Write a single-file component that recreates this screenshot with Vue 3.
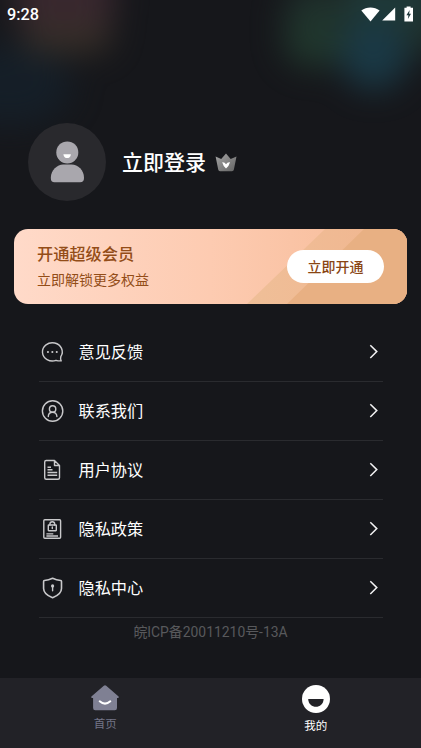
<script setup>
const rows = [
  { icon: 'chat', label: '意见反馈' },
  { icon: 'person', label: '联系我们' },
  { icon: 'doc', label: '用户协议' },
  { icon: 'policy', label: '隐私政策' },
  { icon: 'shield', label: '隐私中心' },
]
</script>

<template>
  <div class="screen">
    <svg class="glow" width="421" height="150" viewBox="0 0 421 150">
      <defs>
        <filter id="soft" x="-100%" y="-100%" width="300%" height="300%" color-interpolation-filters="sRGB"><feGaussianBlur stdDeviation="16" /></filter>
      </defs>
      <g filter="url(#soft)" opacity=".85">
        <ellipse cx="10" cy="85" rx="62" ry="42" fill="#15202a" />
        <rect x="22" y="15" width="90" height="38" rx="18" fill="#3c332a" />
        <rect x="15" y="-40" width="100" height="66" rx="20" fill="#3f2b32" />
        <rect x="285" y="-15" width="160" height="70" rx="25" fill="#21352f" />
        <ellipse cx="315" cy="42" rx="32" ry="26" fill="#223c30" />
        <ellipse cx="374" cy="54" rx="34" ry="36" fill="#1b3f4d" />
        <rect x="350" y="-30" width="90" height="50" fill="#213f3d" />
      </g>
    </svg>
    <header class="status">
      <span class="time">9:28</span>
      <div class="indicators">
        <svg class="wifi" width="19" height="15" viewBox="0 0 19 15"><path d="M0.3 3.6C5.5-.6 13.300-.6 18.600 3.600L9.500 14.600Z" fill="#fff" /></svg>
        <svg class="signal" width="14" height="14" viewBox="0 0 14 14"><path d="M13.200.4V13.500H.2Z" fill="#fff" /></svg>
        <svg class="battery" width="10" height="16" viewBox="0 0 10 16">
          <path d="M2.600 1.800V.4h4v1.400H9V15.400H.4V1.800Z" fill="#fff" />
          <path d="M5.700 4L2.400 9.200h2L3.900 13 7 7.800H5.100Z" fill="#20383c" />
        </svg>
      </div>
    </header>

    <section class="profile">
      <div class="avatar">
        <svg width="78" height="78" viewBox="0 0 78 78">
          <circle cx="39.300" cy="29.400" r="11" fill="#a9a7ad" />
          <path d="M22.800 55C22.800 47 29.500 41.500 35 41.500H43.500C50 41.500 56 47 56 55Q56 59.300 52 59.300H26.500Q22.800 59.300 22.800 55Z" fill="#a9a7ad" />
          <path d="M35.400 31.200H42.900C42.500 36.400 35.800 36.400 35.400 31.200Z" fill="#fff" />
        </svg>
      </div>
      <span class="login">立即登录</span>
      <svg class="crown" width="22" height="19" viewBox="0 0 22 19">
        <defs>
          <linearGradient id="crownFill" x1="0" y1="0" x2="1" y2="1">
            <stop offset="0" stop-color="#a5a5a5" /><stop offset="1" stop-color="#636363" />
          </linearGradient>
        </defs>
        <path d="M.6 3.500L6.200 6 11 .5 15.700 6 21.500 3.500 18.900 16.600Q18.600 18.200 17 18.200H5Q3.500 18.200 3.200 16.600Z" fill="url(#crownFill)" />
        <path d="M7.200 9.300Q9.600 8.900 11 11.200 12.500 8.900 15 9.300 14.200 12.800 11 15.500 8 12.800 7.200 9.300Z" fill="#fff" />
      </svg>
    </section>

    <section class="vip">
      <svg class="vip-bg" width="393" height="75" viewBox="0 0 393 75">
        <defs>
          <linearGradient id="vipBase"><stop offset="0" stop-color="#ffdac9" /><stop offset=".5" stop-color="#fdcbb1" /><stop offset=".85" stop-color="#f8bf9e" /></linearGradient>
          <linearGradient id="vipBand"><stop offset="0" stop-color="#efbf98" /><stop offset="1" stop-color="#f1b58f" /></linearGradient>
        </defs>
        <path d="M0 0H393V75H0Z" fill="url(#vipBase)" />
        <path d="M311 0H393V75H233Z" fill="url(#vipBand)" />
        <path d="M350 0H393V75H273Z" fill="#e8b083" />
      </svg>
      <div class="vip-text">
        <div class="vip-title">开通超级会员</div>
        <div class="vip-sub">立即解锁更多权益</div>
      </div>
      <button class="vip-btn">立即开通</button>
    </section>

    <ul class="menu">
      <li v-for="row in rows" :key="row.label" class="row">
        <svg class="row-icon" width="26" height="26" viewBox="0 0 26 26" fill="none" stroke="#c9c9cb" stroke-width="1.400" stroke-linecap="round" stroke-linejoin="round">
          <template v-if="row.icon === 'chat'">
            <path d="M21.800 17.600A9.900 9.100 0 1 0 17 21.300Q19 22 22.200 21.900Q21.200 20 21.800 17.600Z" />
            <path d="M8.900 13h.1M13.300 13h.1M17.700 13h.1" stroke-width="2" />
          </template>
          <template v-else-if="row.icon === 'person'">
            <circle cx="13.600" cy="13" r="10.200" />
            <circle cx="13.600" cy="10.900" r="3.200" />
            <path d="M9.300 18.600C9.300 12.700 17.900 12.700 17.900 18.600" />
          </template>
          <template v-else-if="row.icon === 'doc'">
            <path d="M15.500 3.500H7.200Q5.700 3.500 5.700 5V20.700Q5.700 22.200 7.200 22.200H19Q20.500 22.200 20.500 20.700V8.500ZM15.500 3.500V8.500H20.500" />
            <path d="M8.500 10.300H12M8.500 12.800H13.500M8.500 15.500H18.200M8.500 18.200H18.200" stroke-linecap="butt" />
          </template>
          <template v-else-if="row.icon === 'policy'">
            <rect x="4.800" y="3.700" width="16.800" height="18.600" rx="1" />
            <rect x="9.300" y="9" width="8" height="5.700" rx=".4" />
            <path d="M10.900 9V8A2.400 2.300 0 0 1 15.700 8V9M13.300 11V12.600" />
            <path d="M7.400 17.800H14.300M7.400 20H19" stroke-width="1.300" stroke-linecap="butt" />
          </template>
          <template v-else>
            <path d="M13.600 3.200Q17.500 5 21.700 5.500Q22.500 5.700 22.500 6.500V13.500C22.500 18.300 18.500 20.800 13.600 22.800C8.600 20.800 4.600 18.300 4.600 13.500V6.500Q4.600 5.700 5.400 5.500Q9.700 5 13.600 3.200Z" stroke-width="1.600" />
            <circle cx="13.600" cy="10.900" r="1.600" fill="#c9c9cb" stroke="none" />
            <path d="M13.600 11V15.700" />
          </template>
        </svg>
        <span class="row-label">{{ row.label }}</span>
        <svg class="chevron" width="10" height="16" viewBox="0 0 10 16"><path d="M1.300 1.200L7.800 7.600 1.300 14" fill="none" stroke="#f2f2f3" stroke-width="1.500" /></svg>
      </li>
    </ul>

    <p class="icp">皖ICP备20011210号-13A</p>

    <nav class="tabs">
      <div class="tab home">
        <svg width="28" height="26" viewBox="0 0 28 26">
          <path d="M12.800.7Q14 -.2 15.200.7L27.600 11.500Q28.300 13 26.800 13H26V23Q26 25.200 23.800 25.200H4.300Q2.100 25.200 2.100 23V13H1.200Q-.3 13 .4 11.500Z" fill="#7f8093" />
          <path d="M8.700 16.300Q14 20.900 19.300 16.300" fill="none" stroke="#fff" stroke-width="2" stroke-linecap="round" />
        </svg>
        <span>首页</span>
      </div>
      <div class="tab mine">
        <svg width="28" height="28" viewBox="0 0 28 28">
          <circle cx="14" cy="14" r="14" fill="#fff" />
          <path d="M6.200 14H21.600C21.300 24.400 6.500 24.400 6.200 14Z" fill="#222227" />
        </svg>
        <span>我的</span>
      </div>
    </nav>
  </div>
</template>

<style>
body { background: #16171b; }
</style>

<style scoped>
.screen {
  position: relative;
  box-sizing: border-box;
  width: 421px;
  height: 748px;
  display: flex;
  flex-direction: column;
  overflow: hidden;
  font-family: Roboto, "Noto Sans CJK SC", sans-serif;
  color: #fff;
  background: #16171b;
}
.glow { position: absolute; left: 0; top: 0; }
.status { position: relative; height: 30px; flex: none; display: flex; align-items: center; justify-content: space-between; padding: 0 7px; }
.time { font-size: 16.300px; font-weight: 500; line-height: 30px; }
.indicators { display: flex; align-items: center; height: 28px; margin-bottom: 2px; }
.signal { margin-left: 2px; }
.battery { margin-left: 8px; }
.indicators svg, .profile svg, .row svg, .tab svg { display: block; flex: none; }

.profile { position: relative; flex: none; height: 78px; margin-top: 93px; padding-left: 28px; display: flex; align-items: center; }
.avatar { width: 78px; height: 78px; border-radius: 50%; background: #29292d; }
.login { margin-left: 16px; padding-top: 2px; font-size: 21px; font-weight: 500; line-height: 30px; }
.crown { margin-left: 9px; }

.vip { flex: none; position: relative; box-sizing: border-box; width: 393px; height: 75px; margin: 28px 14px 0; padding: 0 23px; border-radius: 14px; overflow: hidden; display: flex; align-items: center; justify-content: space-between; }
.vip-bg { position: absolute; left: 0; top: 0; }
.vip-text { position: relative; color: #934d18; }
.vip-title { padding-top: 1px; font-size: 16.200px; font-weight: 500; line-height: 26px; }
.vip-sub { font-size: 14px; line-height: 24px; }
.vip-btn { position: relative; width: 97px; height: 33px; padding: 1px 0 0; border: 0; border-radius: 17px; background: #fff; color: #8a4514; font: 500 14px/32px Roboto, "Noto Sans CJK SC", sans-serif; }

.menu { flex: none; list-style: none; margin: 19px 38px 0 39px; padding: 0; }
.row { box-sizing: border-box; height: 59px; display: flex; align-items: center; border-bottom: 1px solid #2a2b2f; }
.row-label { flex: 1; margin-left: 13.500px; padding-top: 2px; font-size: 16.200px; line-height: 24px; }
.chevron { margin-right: 4px; }

.icp { flex: none; margin: 3px 0 0; text-align: center; font-size: 13.900px; line-height: 22px; color: #58595c; }

.tabs { flex: none; height: 70px; margin-top: auto; display: flex; background: #222227; }
.tab { flex: 1; display: flex; flex-direction: column; align-items: center; padding-top: 7px; font-size: 11.500px; line-height: 16px; }
.home { color: #747588; }
.home span { margin-top: 5px; }
.mine span { margin-top: 5px; }
</style>
